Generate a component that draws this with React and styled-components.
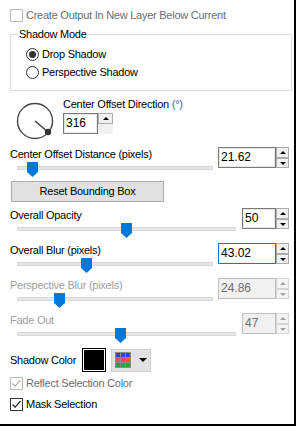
import React from "react";
import styled, { createGlobalStyle } from "styled-components";

const GlobalStyle = createGlobalStyle`
  html, body { margin: 0; padding: 0; background: #fff; }
  body { font-family: "Liberation Sans", Arial, sans-serif; font-size: 11px; }
`;

const Panel = styled.div`
  width: 296px;
  height: 426px;
  box-sizing: border-box;
  border-right: 2px solid #000;
  border-bottom: 2px solid #000;
  background: #fff;
  padding: 9px 2px 0 10px;
  display: flex;
  flex-direction: column;
  color: #000;
  letter-spacing: -0.25px;
  overflow: hidden;
`;

const CheckRow = styled.div`
  display: flex;
  align-items: center;
  gap: 3px;
  height: 13px;
  line-height: 13px;
  margin-top: ${(p) => p.$mt || 0}px;
  color: ${(p) => (p.$disabled ? "#6d6d6d" : "#000")};
`;

const CheckBox = styled.span`
  width: 13px;
  height: 13px;
  box-sizing: border-box;
  border: 1px solid ${(p) => (p.$disabled ? "#bcbcbc" : "#333")};
  background: #fff;
  display: flex;
  align-items: center;
  justify-content: center;
  flex-shrink: 0;
`;

const Group = styled.div`
  margin-top: 12px;
  height: 57px;
  box-sizing: border-box;
  border: 1px solid #dcdcdc;
`;

const Legend = styled.div`
  width: fit-content;
  margin: -7px 0 0 7px;
  padding: 0 1px;
  background: #fff;
  line-height: 13px;
`;

const RadioList = styled.div`
  display: flex;
  flex-direction: column;
  gap: 5px;
  margin-top: 7px;
  padding-left: 15px;
`;

const RadioRow = styled.div`
  display: flex;
  align-items: center;
  gap: 3px;
  height: 13px;
  line-height: 13px;
`;

const RadioCircle = styled.span`
  width: 13px;
  height: 13px;
  box-sizing: border-box;
  border: 1px solid #333;
  border-radius: 50%;
  background: #fff;
  display: flex;
  align-items: center;
  justify-content: center;
  &::after {
    content: "";
    width: 7px;
    height: 7px;
    border-radius: 50%;
    background: ${(p) => (p.$checked ? "#333" : "transparent")};
  }
`;

const DialRow = styled.div`
  display: flex;
  margin-top: 7px;
`;

const DialSvg = styled.svg`
  width: 40px;
  height: 40px;
  margin: 3px 0 0 5px;
  flex-shrink: 0;
`;

const DialInfo = styled.div`
  display: flex;
  flex-direction: column;
  align-items: flex-start;
  margin-left: 8px;
  gap: 2px;
`;

const Label = styled.div`
  line-height: 13px;
  height: 13px;
  white-space: nowrap;
  color: ${(p) => (p.$disabled ? "#a0a0a0" : "#000")};
`;

const Degree = styled.span`
  color: #2f66b0;
`;

const SliderRow = styled.div`
  display: flex;
  justify-content: space-between;
  align-items: flex-start;
  margin-top: ${(p) => p.$mt}px;
`;

const SliderCol = styled.div`
  display: flex;
  flex-direction: column;
  gap: 1px;
`;

const SliderArea = styled.div`
  position: relative;
  width: ${(p) => p.$w}px;
  height: 15px;
  margin-left: 7px;
`;

const Track = styled.div`
  margin-top: 4px;
  height: 4px;
  box-sizing: border-box;
  border: 1px solid #d6d6d6;
  background: #e7e7e7;
`;

const Thumb = styled.div`
  position: absolute;
  top: 0;
  left: ${(p) => p.$left}px;
  width: 11px;
  height: 15px;
  background: #0078d7;
  clip-path: polygon(0 0, 100% 0, 100% 10px, 50% 100%, 0 10px);
`;

const Spin = styled.div`
  display: flex;
  margin-top: ${(p) => p.$mt ?? -1}px;
  margin-right: ${(p) => p.$mr ?? 3}px;
  letter-spacing: 0;
`;

const SpinInput = styled.div`
  width: ${(p) => p.$w}px;
  height: 21px;
  box-sizing: border-box;
  border: 1px solid
    ${(p) => (p.$focus ? "#0078d7" : p.$disabled ? "#bfbfbf" : "#7a7a7a")};
  box-shadow: ${(p) => (p.$focus || p.$disabled ? "none" : "inset 0 0 0 1px #e8e8e8")};
  background: ${(p) => (p.$disabled ? "#f0f0f0" : "#fff")};
  color: ${(p) => (p.$disabled ? "#6d6d6d" : "#000")};
  padding-left: 2px;
  line-height: 19px;
  font-size: 12px;
`;

const SpinButtons = styled.div`
  display: flex;
  flex-direction: column;
  width: ${(p) => p.$w || 13}px;
  height: 21px;
  background: #f0f0f0;
`;

const SpinBtn = styled.div`
  height: ${(p) => p.$h}px;
  box-sizing: border-box;
  border: 1px solid ${(p) => (p.$disabled ? "#d4d4d4" : "#acacac")};
  background: ${(p) => (p.$disabled ? "#f4f4f4" : "#f0f0f0")};
  display: flex;
  align-items: center;
  justify-content: center;
  &::after {
    content: "";
    width: 0;
    height: 0;
    border-left: 3px solid transparent;
    border-right: 3px solid transparent;
    ${(p) => (p.$down ? "border-top" : "border-bottom")}: 3px solid
      ${(p) => (p.$disabled ? "#a0a0a0" : "#000")};
  }
`;

const ResetButton = styled.div`
  margin: 4px 0 0 1px;
  width: 153px;
  height: 21px;
  box-sizing: border-box;
  border: 1px solid #adadad;
  background: #e1e1e1;
  line-height: 19px;
  text-align: center;
`;

const ColorRow = styled.div`
  display: flex;
  align-items: center;
  margin-top: 5px;
  height: 24px;
`;

const ColorLabel = styled.div`
  width: 72px;
  line-height: 13px;
`;

const Swatch = styled.div`
  width: 24px;
  height: 24px;
  box-sizing: border-box;
  border: 1px solid #000;
  padding: 1px;
  background: #fff;
  &::after {
    content: "";
    display: block;
    width: 100%;
    height: 100%;
    background: #000;
  }
`;

const PaletteButton = styled.div`
  margin-left: 5px;
  width: 40px;
  height: 23px;
  box-sizing: border-box;
  border: 1px solid #d0d0d0;
  background: #e1e1e1;
  display: flex;
  align-items: center;
  padding-left: 3px;
  gap: 8px;
`;

const DropArrow = styled.span`
  width: 0;
  height: 0;
  border-left: 4px solid transparent;
  border-right: 4px solid transparent;
  border-top: 4px solid #000;
`;

function Check({ disabled }) {
  return (
    <svg width="11" height="11" viewBox="0 0 11 11">
      <path
        d="M1.5 5.5 L4.2 8.2 L9.5 2"
        fill="none"
        stroke={disabled ? "#b4b4b4" : "#222"}
        strokeWidth="1.2"
      />
    </svg>
  );
}

function SpinBox({ value, w, disabled, focus, upOnly, btnW, mt, mr }) {
  return (
    <Spin $mt={mt} $mr={mr}>
      <SpinInput $w={w} $disabled={disabled} $focus={focus}>
        {value}
      </SpinInput>
      <SpinButtons $w={btnW}>
        <SpinBtn $h={upOnly ? 11 : 11} $disabled={disabled} />
        {!upOnly && <SpinBtn $h={10} $down $disabled={disabled} />}
      </SpinButtons>
    </Spin>
  );
}

function SliderField({ label, mt, trackW, thumb, value, boxW, disabled, focus }) {
  return (
    <SliderRow $mt={mt}>
      <SliderCol>
        <Label $disabled={disabled}>{label}</Label>
        <SliderArea $w={trackW}>
          <Track />
          <Thumb $left={thumb} />
        </SliderArea>
      </SliderCol>
      <SpinBox value={value} w={boxW} disabled={disabled} focus={focus} />
    </SliderRow>
  );
}

function PaletteGrid() {
  const rows = ["#3c3cff", "#ff4f4f", "#2e9e46"];
  return (
    <svg width="16" height="16" viewBox="0 0 16 16">
      <rect x="0" y="0" width="16" height="16" fill="#8a8a8a" />
      {rows.map((c, r) =>
        [0, 1, 2].map((col) => (
          <rect key={`${r}-${col}`} x={1 + col * 5} y={1 + r * 5} width="4" height="4" fill={c} />
        ))
      )}
    </svg>
  );
}

export default function App() {
  return (
    <>
      <GlobalStyle />
      <Panel>
        <CheckRow $disabled>
          <CheckBox $disabled />
          <span>Create Output In New Layer Below Current</span>
        </CheckRow>

        <Group>
          <Legend>Shadow Mode</Legend>
          <RadioList>
            <RadioRow>
              <RadioCircle $checked />
              <span>Drop Shadow</span>
            </RadioRow>
            <RadioRow>
              <RadioCircle />
              <span>Perspective Shadow</span>
            </RadioRow>
          </RadioList>
        </Group>

        <DialRow>
          <DialSvg viewBox="0 0 40 40">
            <circle cx="20" cy="20" r="17.5" fill="none" stroke="#444" strokeWidth="1.4" />
            <line x1="20" y1="20" x2="33" y2="31" stroke="#333" strokeWidth="1.4" />
            <circle cx="33" cy="31" r="3.2" fill="#333" />
          </DialSvg>
          <DialInfo>
            <Label>
              Center Offset Direction <Degree>(°)</Degree>
            </Label>
            <SpinBox value="316" w={35} upOnly btnW={15} mt={0} mr={0} />
          </DialInfo>
        </DialRow>

        <SliderField
          label="Center Offset Distance (pixels)"
          mt={7}
          trackW={196}
          thumb={10}
          value="21.62"
          boxW={58}
        />

        <ResetButton>Reset Bounding Box</ResetButton>

        <SliderField label="Overall Opacity" mt={7} trackW={219} thumb={104} value="50" boxW={34} />
        <SliderField
          label="Overall Blur (pixels)"
          mt={6}
          trackW={196}
          thumb={64}
          value="43.02"
          boxW={58}
          focus
        />
        <SliderField
          label="Perspective Blur (pixels)"
          mt={6}
          trackW={196}
          thumb={37}
          value="24.86"
          boxW={58}
          disabled
        />
        <SliderField label="Fade Out" mt={6} trackW={219} thumb={98} value="47" boxW={34} disabled />

        <ColorRow>
          <ColorLabel>Shadow Color</ColorLabel>
          <Swatch />
          <PaletteButton>
            <PaletteGrid />
            <DropArrow />
          </PaletteButton>
        </ColorRow>

        <CheckRow $disabled $mt={5}>
          <CheckBox $disabled>
            <Check disabled />
          </CheckBox>
          <span>Reflect Selection Color</span>
        </CheckRow>
        <CheckRow $mt={8}>
          <CheckBox>
            <Check />
          </CheckBox>
          <span>Mask Selection</span>
        </CheckRow>
      </Panel>
    </>
  );
}
